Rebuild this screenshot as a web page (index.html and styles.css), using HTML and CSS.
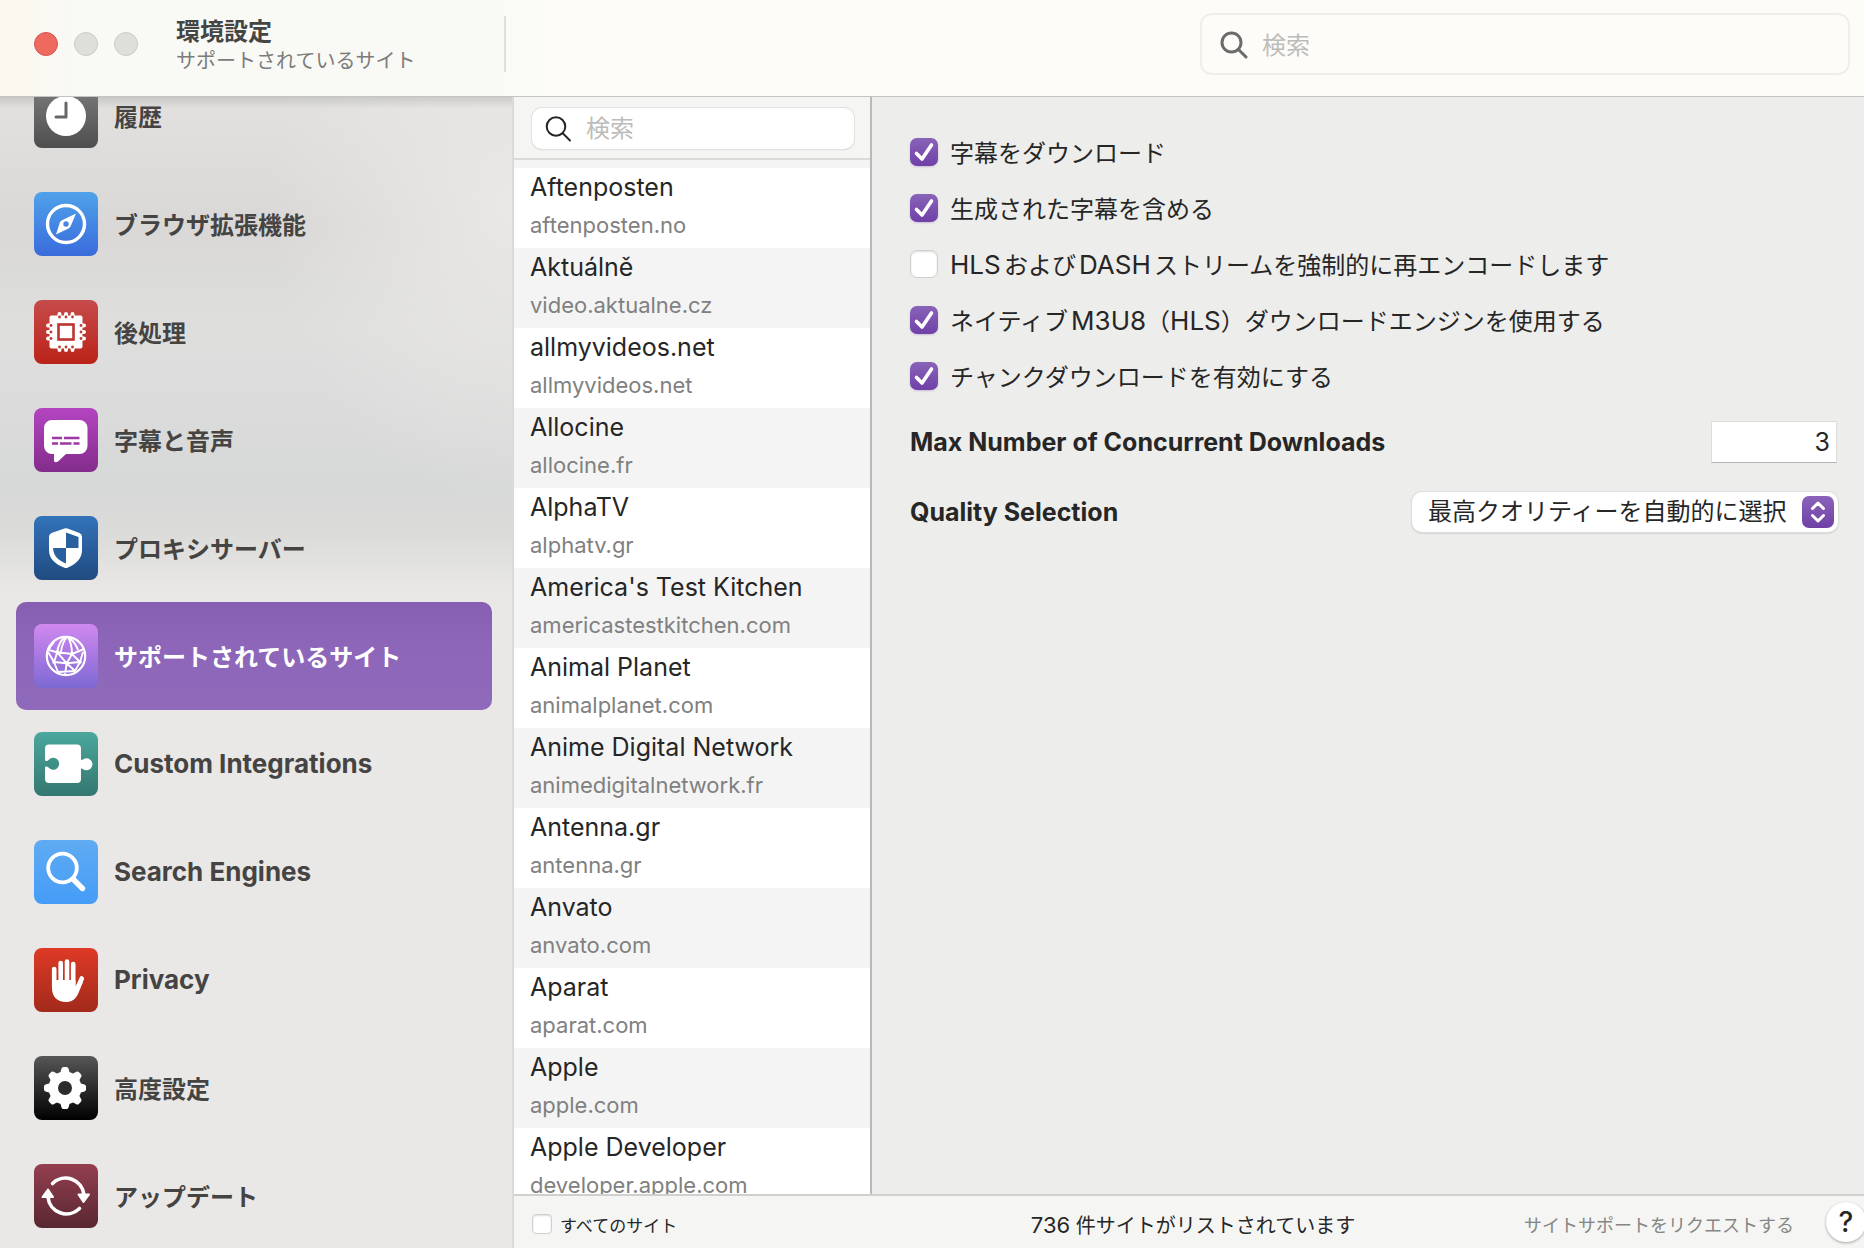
FILE: index.html
```html
<!DOCTYPE html>
<html lang="ja">
<head>
<meta charset="utf-8">
<meta name="viewport" content="width=device-width, initial-scale=1">
<title>環境設定</title>
<link rel="stylesheet" href="styles.css">
</head>
<body>
<div class="window">
  <header class="toolbar">
    <div class="toolbar-side">
      <div class="lights">
        <button class="light light-close" type="button" aria-label="閉じる"></button>
        <button class="light" type="button" aria-label="しまう"></button>
        <button class="light" type="button" aria-label="拡大"></button>
      </div>
      <div class="titles">
        <h1>環境設定</h1>
        <p>サポートされているサイト</p>
      </div>
    </div>
    <label class="search search-main">
      <svg viewBox="0 0 28 28" aria-hidden="true"><circle cx="11.5" cy="11.5" r="9.5"/><path d="M18.5 18.5 26 26"/></svg>
      <input type="search" placeholder="検索" aria-label="設定を検索">
    </label>
  </header>

  <div class="body">
    <nav class="sidebar">
      <ul>
        <li><a href="#history"><svg class="icon icon-history" viewBox="0 0 64 64" aria-hidden="true"><circle cx="32" cy="32" r="20" fill="#fff"/><path d="M32 19v14H22" fill="none" stroke="#666" stroke-width="3" stroke-linecap="round" stroke-linejoin="round"/></svg><span class="ja">履歴</span></a></li>
        <li><a href="#browser"><svg class="icon icon-browser" viewBox="0 0 64 64" aria-hidden="true"><circle cx="32" cy="32" r="18.5" fill="none" stroke="#fff" stroke-width="3.4"/><path fill="#fff" fill-rule="evenodd" d="M42 21.5 27.500 28.500Q26.500 29 26 30L22 42.500 34.500 36.500Q36 35.500 36.500 34.500ZM32 29.300a2.700 2.700 0 1 0 0 5.400 2.700 2.700 0 0 0 0-5.400"/></svg><span class="ja">ブラウザ拡張機能</span></a></li>
        <li><a href="#post"><svg class="icon icon-post" viewBox="0 0 64 64" aria-hidden="true"><rect x="15.500" y="15.500" width="33" height="33" rx="2" fill="#fff"/><g fill="none" stroke="#fff" stroke-width="4" stroke-linecap="round"><path d="M25.500 14v36M32 14v36M38.500 14v36M14 25.500h36M14 32h36M14 38.500h36"/></g><g fill="#c03a35"><circle cx="25.500" cy="17" r="1.400"/><circle cx="32" cy="17" r="1.400"/><circle cx="38.500" cy="17" r="1.400"/><circle cx="25.500" cy="47" r="1.400"/><circle cx="32" cy="47" r="1.400"/><circle cx="38.500" cy="47" r="1.400"/><circle cx="17" cy="25.500" r="1.400"/><circle cx="17" cy="32" r="1.400"/><circle cx="17" cy="38.500" r="1.400"/><circle cx="47" cy="25.500" r="1.400"/><circle cx="47" cy="32" r="1.400"/><circle cx="47" cy="38.500" r="1.400"/></g><rect x="24.500" y="24.500" width="15" height="15" fill="none" stroke="#bd3530" stroke-width="2.600"/></svg><span class="ja">後処理</span></a></li>
        <li><a href="#subtitles"><svg class="icon icon-subtitles" viewBox="0 0 64 64" aria-hidden="true"><path fill="#fff" d="M18 12h27.500a8 8 0 0 1 8 8v18a8 8 0 0 1-8 8H32l-8 7.500Q20 55.500 20 52v-6h-2a8 8 0 0 1-8-8V20a8 8 0 0 1 8-8"/><path d="M18 30h10M30 30h15.500M18 35.500h6M26 35.500h11.500M39.500 35.500h6" fill="none" stroke="#9c37a5" stroke-width="2.400"/></svg><span class="ja">字幕と音声</span></a></li>
        <li><a href="#proxy"><svg class="icon icon-proxy" viewBox="0 0 64 64" aria-hidden="true"><path fill="#fff" d="M30.500 12.500q1.500-.6 3 0L45.500 17q2.500 1 2.500 3.500V34c0 9-6 14-14.500 17.700q-1.500.6-3 0C21 48 15 43 15 34V20.500q0-2.500 2.500-3.500z"/><path class="shield-cut" d="M32 16.500 44.500 21v11H32zM19 32h13v15.500C24 44 19.500 40 19 32"/></svg><span class="ja">プロキシサーバー</span></a></li>
        <li><a href="#sites" class="current" aria-current="page"><svg class="icon icon-sites" viewBox="0 0 64 64" aria-hidden="true"><g fill="none" stroke="#fff" stroke-width="1.900"><circle cx="32" cy="32" r="19.200" stroke-width="2.200"/><path d="M31 13Q24 19 23.300 28.300M33 13Q28 19 27 28M34 13Q38 20 38 30M36 14Q42 20 44 26M20 18Q16 22 15 26L23.300 28.300 38 30 50 25M23.300 28.300 20 38 14 28M23.300 28.300 32.700 39.300 38 30 46 38 49 28M20 38 32.700 39.300 46 38M20 38 24 48M32.700 39.300 31 50M32.700 39.300 41 47 46 38M24 48 41 47"/></g><g fill="#fff"><circle cx="23.300" cy="28.300" r="2"/><circle cx="38" cy="30" r="2"/><circle cx="20" cy="38" r="1.800"/><circle cx="32.700" cy="39.300" r="2"/><circle cx="46" cy="38" r="1.800"/></g></svg><span class="ja">サポートされているサイト</span></a></li>
        <li><a href="#custom"><svg class="icon icon-custom" viewBox="0 0 64 64" aria-hidden="true"><path fill="#fff" d="M15 12.500h28a4 4 0 0 1 4 4V27q0 1.500 1.500.8a6 6 0 1 1 0 9Q47 36 47 37.500V47a4 4 0 0 1-4 4H15a4 4 0 0 1-4-4V35.500q0-1 1.300-1 1.400 0 2.200 1a6 6 0 1 0 0-7.500q-.8 1-2.200 1-1.300 0-1.300-1V16.500a4 4 0 0 1 4-4"/></svg><span class="latin">Custom Integrations</span></a></li>
        <li><a href="#engines"><svg class="icon icon-engines" viewBox="0 0 64 64" aria-hidden="true"><g fill="none" stroke="#fff"><circle cx="28.500" cy="28" r="14.300" stroke-width="3.800"/><path d="M39.500 39.500 48.500 48.500" stroke-width="5.400" stroke-linecap="round"/></g></svg><span class="latin">Search Engines</span></a></li>
        <li><a href="#privacy"><svg class="icon icon-privacy" viewBox="0 0 64 64" aria-hidden="true"><path d="M20.200 21v18M26.700 15v20M33 13.500V35M39.200 16v20M47.800 30.500 42.500 42" fill="none" stroke="#fff" stroke-width="4.600" stroke-linecap="round"/><path fill="#fff" d="M18 32h23.500v6l4.500-5 3 1-5 12c-2.500 5.500-6.500 8-12 8-9 0-14-5.500-14-14z"/></svg><span class="latin">Privacy</span></a></li>
        <li><a href="#advanced"><svg class="icon icon-advanced" viewBox="0 0 64 64" aria-hidden="true"><g fill="#fff"><circle cx="31" cy="32" r="16.500"/><path id="tooth" d="M26 18 27.500 12.500Q28 11 29.500 11h3q1.500 0 2 1.500L36 18zM26 46 27.500 51.500Q28 53 29.500 53h3q1.500 0 2-1.500L36 46z"/><use href="#tooth" transform="rotate(45 31 32)"/><use href="#tooth" transform="rotate(90 31 32)"/><use href="#tooth" transform="rotate(135 31 32)"/></g><circle cx="31" cy="32" r="7" fill="#2c2c2c"/></svg><span class="ja">高度設定</span></a></li>
        <li><a href="#update"><svg class="icon icon-update" viewBox="0 0 64 64" aria-hidden="true"><g fill="none" stroke="#fff" stroke-width="3.600" stroke-linecap="round"><path d="M18.500 19.500A18.500 18.500 0 0 1 50 31"/><path d="M45.500 44.500A18.500 18.500 0 0 1 14 33"/></g><path fill="#fff" stroke="#fff" stroke-width="2" stroke-linejoin="round" d="M44.500 30.500h10.500L49.500 38zM8.500 33h10.500L14 25.500z"/></svg><span class="ja">アップデート</span></a></li>
      </ul>
    </nav>

    <main class="content">
      <div class="panes">
        <section class="sites">
          <div class="sites-head">
            <label class="search search-sites">
              <svg viewBox="0 0 28 28" aria-hidden="true"><circle cx="12" cy="11.500" r="9.300"/><path d="M19 18.500 26 25.500"/></svg>
              <input type="search" placeholder="検索" aria-label="サイトを検索">
            </label>
          </div>
          <ul class="site-list">
            <li><b>Aftenposten</b><span>aftenposten.no</span></li>
            <li><b>Aktuálně</b><span>video.aktualne.cz</span></li>
            <li><b>allmyvideos.net</b><span>allmyvideos.net</span></li>
            <li><b>Allocine</b><span>allocine.fr</span></li>
            <li><b>AlphaTV</b><span>alphatv.gr</span></li>
            <li><b>America's Test Kitchen</b><span>americastestkitchen.com</span></li>
            <li><b>Animal Planet</b><span>animalplanet.com</span></li>
            <li><b>Anime Digital Network</b><span>animedigitalnetwork.fr</span></li>
            <li><b>Antenna.gr</b><span>antenna.gr</span></li>
            <li><b>Anvato</b><span>anvato.com</span></li>
            <li><b>Aparat</b><span>aparat.com</span></li>
            <li><b>Apple</b><span>apple.com</span></li>
            <li><b>Apple Developer</b><span>developer.apple.com</span></li>
          </ul>
        </section>

        <form class="options">
          <div class="checks">
            <label class="check"><input type="checkbox" checked><span class="ja">字幕をダウンロード</span></label>
            <label class="check"><input type="checkbox" checked><span class="ja">生成された字幕を含める</span></label>
            <label class="check"><input type="checkbox"><span class="ja"><span class="latin">HLS</span>および<span class="latin">DASH</span>ストリームを強制的に再エンコードします</span></label>
            <label class="check"><input type="checkbox" checked><span class="ja">ネイティブ<span class="latin">M3U8</span>（<span class="latin">HLS</span>）ダウンロードエンジンを使用する</span></label>
            <label class="check"><input type="checkbox" checked><span class="ja">チャンクダウンロードを有効にする</span></label>
          </div>
          <div class="field">
            <label for="max">Max Number of Concurrent Downloads</label>
            <input class="number" id="max" type="text" inputmode="numeric" value="3">
          </div>
          <div class="field">
            <label for="quality">Quality Selection</label>
            <div class="select">
              <select id="quality"><option>最高クオリティーを自動的に選択</option></select>
              <svg viewBox="0 0 32 32" aria-hidden="true"><path d="M10.500 12.500 16 7l5.500 5.500M10.500 19.500 16 25l5.500-5.500"/></svg>
            </div>
          </div>
        </form>
      </div>

      <footer class="statusbar">
        <label class="check check-small"><input type="checkbox">すべてのサイト</label>
        <p class="count"><span class="number-of">736</span> 件サイトがリストされています</p>
        <div class="actions">
          <a class="request" href="#request">サイトサポートをリクエストする</a>
          <button class="help" type="button" aria-label="ヘルプ">?</button>
        </div>
      </footer>
    </main>
  </div>
</div>
</body>
</html>
```
FILE: styles.css
```css
* {
  box-sizing: border-box;
}

body,
h1,
p,
ul {
  margin: 0;
  padding: 0;
}

ul {
  list-style: none;
}

body {
  font-family: Inter, "Noto Sans CJK JP", sans-serif;
  font-size: 24px;
  color: #262626;
  text-autospace: normal;
}

input,
select,
button {
  font: inherit;
  color: inherit;
  margin: 0;
  padding: 0;
}

.ja {
  padding-bottom: 2px;
}

.latin {
  font-size: 26px;
  line-height: 32px;
}

.window {
  display: flex;
  flex-direction: column;
  height: 100vh;
  overflow: hidden;
}

/* Toolbar */

.toolbar {
  flex: none;
  z-index: 1;
  display: flex;
  align-items: center;
  justify-content: space-between;
  height: 97px;
  padding: 0 14px 8px 34px;
  border-bottom: 1px solid #c4c4c2;
  background: linear-gradient(90deg, #fcf8ef, #f9f9f5 80px, #f9f9f5 480px, #fdfcf8 580px);
}

.toolbar-side {
  display: flex;
  align-items: center;
  gap: 38px;
  width: 472px;
  height: 56px;
  border-right: 2px solid #dededc;
}

.lights {
  display: flex;
  gap: 16px;
}

.light {
  width: 24px;
  height: 24px;
  border: 1px solid #cbcbc8;
  border-radius: 50%;
  background: #dededb;
}

.light-close {
  border-color: #d6574d;
  background: #ee695e;
}

.titles {
  padding-top: 4px;
}

.titles h1 {
  font-size: 24px;
  line-height: 30px;
  color: #454543;
}

.titles p {
  font-size: 20px;
  line-height: 28px;
  color: #7c7c7a;
}

.search {
  display: flex;
  align-items: center;
}

.search svg {
  flex: none;
  width: 28px;
  height: 28px;
  fill: none;
  stroke: #262626;
  stroke-width: 2;
  stroke-linecap: round;
}

.search input {
  flex: 1;
  min-width: 0;
  border: 0;
  outline: 0;
  background: none;
  appearance: none;
}

.search input::placeholder {
  color: #bcbcba;
  opacity: 1;
}

.search-main {
  gap: 14px;
  width: 650px;
  height: 62px;
  padding: 2px 18px 0;
  border: 2px solid #efeeeb;
  border-radius: 12px;
}

.search-main svg {
  stroke: #6b6b69;
  stroke-width: 3;
}

/* Sidebar */

.body {
  flex: 1;
  display: flex;
  min-height: 0;
}

.sidebar {
  flex: none;
  width: 514px;
  padding: 0 20px 0 16px;
  overflow: hidden;
  border-right: 2px solid #dadada;
  background:
    linear-gradient(#0000001c, #00000000 12px),
    radial-gradient(240px 300px at 100% 110px, #e9e8e6, #e9e8e600),
    linear-gradient(#e2e1e0, #d9d8d6 130px, #dededd 230px, #dcdcdc 290px, #d6d8d7 390px, #dcdcda 440px, #e8e7e5 490px, #e9e8e6 520px);
}

/* The list is scrolled part of the way past its first row. */
.sidebar ul {
  margin-top: -35px;
}

.sidebar a {
  display: flex;
  align-items: center;
  gap: 16px;
  height: 108px;
  padding: 0 18px;
  border-radius: 10px;
  font-weight: 700;
  color: #454443;
  text-decoration: none;
}

.sidebar a.current {
  color: #fff;
  background: linear-gradient(#865eb2, #8d66b9 40%, #8f69ba);
}

.icon {
  flex: none;
  width: 64px;
  height: 64px;
  border-radius: 8px;
}

.icon-history { background: linear-gradient(#7d7d7d, #4e4e4e); }
.icon-browser { background: linear-gradient(#4fa2ea, #3a6bdc); }
.icon-post { background: linear-gradient(#c64b4b, #ba2318); }
.icon-subtitles { background: linear-gradient(#b445c0, #832c8b); }
.icon-proxy { background: linear-gradient(#3273b9, #204b80); }
.icon-sites { background: linear-gradient(#d089ef, #7d69d3); }
.icon-custom { background: linear-gradient(#4ba79c, #347771); }
.icon-engines { background: linear-gradient(#5fabf2, #459cf7); }
.icon-privacy { background: linear-gradient(#de3a26, #a22a1b); }
.icon-advanced { background: linear-gradient(#575757, #000); }
.icon-update { background: linear-gradient(#943f50, #582731); }

.shield-cut {
  fill: #2a609f;
}

/* Site list */

.content {
  flex: 1;
  display: flex;
  flex-direction: column;
  min-width: 0;
  overflow: hidden;
}

.panes {
  flex: 1;
  display: flex;
  min-height: 0;
}

.sites {
  flex: none;
  display: flex;
  flex-direction: column;
  width: 358px;
  border-right: 2px solid #b9b9b9;
}

.sites-head {
  flex: none;
  padding: 11px 16px 9px 18px;
  border-bottom: 2px solid #dadada;
  background: #f5f5f3;
}

.search-sites {
  gap: 14px;
  height: 41px;
  padding: 0 12px;
  border-radius: 10px;
  background: #fff;
  box-shadow: 0 0 0 1px #e2e2e0, 0 1px 1px #a8a8a6;
}

.site-list {
  flex: 1;
  min-height: 0;
  padding-top: 8px;
  overflow: hidden;
  background: #f4f4f4;
}

.site-list li {
  height: 80px;
  padding-left: 16px;
}

.site-list li:nth-child(odd) {
  background: #fff;
}

.site-list b,
.site-list span {
  display: block;
  line-height: 38px;
  white-space: nowrap;
}

.site-list b {
  font-size: 25px;
  font-weight: 400;
}

.site-list span {
  font-size: 22px;
  color: #808080;
}

/* Options */

.options {
  flex: 1;
  min-width: 0;
  padding: 27px 26px 27px 38px;
  background: #ededeb;
}

.checks {
  margin-bottom: 3px;
}

.check {
  display: flex;
  align-items: center;
  gap: 12px;
  height: 56px;
  white-space: nowrap;
}

.check input {
  flex: none;
  width: 28px;
  height: 28px;
  border: 1px solid #cfcfcd;
  border-radius: 7px;
  background: #fff;
  box-shadow: inset 0 1px 2px #00000022;
  appearance: none;
}

.check input:checked {
  border: 0;
  background: url("data:image/svg+xml,%3Csvg xmlns='http://www.w3.org/2000/svg' viewBox='0 0 28 28'%3E%3Cpath d='M6.500 15.500 12 21 21.500 7' fill='none' stroke='white' stroke-width='3.600' stroke-linecap='round' stroke-linejoin='round'/%3E%3C/svg%3E"), linear-gradient(#8a63b9, #7040a6);
  box-shadow: 0 1px 2px #7040a644;
}

.field {
  display: flex;
  align-items: center;
  justify-content: space-between;
  height: 70px;
}

.field label {
  font-size: 25px;
  font-weight: 700;
}

.number {
  width: 126px;
  height: 42px;
  margin-right: 1px;
  padding: 0 6px;
  border: 1px solid #dcdcda;
  border-bottom-color: #b5b5b3;
  border-radius: 0;
  background: #fff;
  font-size: 25px;
  text-align: right;
}

.select {
  position: relative;
}

.select select {
  display: block;
  width: 426px;
  height: 40px;
  padding: 0 50px 2px 16px;
  border: 0;
  border-radius: 10px;
  background: #fff;
  box-shadow: 0 0 0 1px #dededc, 0 1px 2px #00000055;
  appearance: none;
}

.select svg {
  position: absolute;
  top: 4px;
  right: 4px;
  width: 32px;
  height: 32px;
  border-radius: 7px;
  background: linear-gradient(#8a63b9, #7040a6);
  fill: none;
  stroke: #fff;
  stroke-width: 3;
  stroke-linecap: round;
  stroke-linejoin: round;
  pointer-events: none;
}

/* Status bar */

.statusbar {
  flex: none;
  display: grid;
  grid-template-columns: 1fr auto 1fr;
  align-items: center;
  height: 54px;
  padding: 4px 0 0 8px;
  border-top: 2px solid #d0d0ce;
  background: #f5f5f3;
  white-space: nowrap;
}

.check-small {
  gap: 8px;
  height: 40px;
  padding-left: 10px;
  font-size: 17px;
}

.check-small input {
  width: 20px;
  height: 20px;
  border-radius: 4px;
}

.count {
  font-size: 20px;
}

.number-of {
  font-size: 22px;
}

.actions {
  display: flex;
  align-items: center;
  justify-content: flex-end;
  gap: 32px;
  margin-right: -2px;
}

.request {
  font-size: 18px;
  color: #858583;
  text-decoration: none;
}

.help {
  flex: none;
  width: 40px;
  height: 40px;
  margin-bottom: 4px;
  border: 0;
  border-radius: 50%;
  background: #fff;
  box-shadow: 0 1px 3px #00000055;
  font-size: 28px;
  font-weight: 500;
}
```
